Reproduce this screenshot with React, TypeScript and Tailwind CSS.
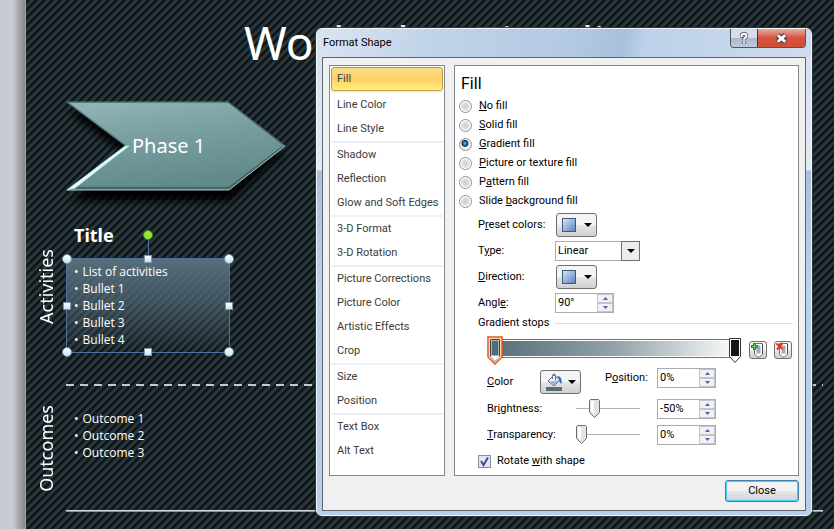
import { useState, type ReactNode } from 'react'

const NAV_GROUPS = [
  ['Fill'],
  ['Line Color', 'Line Style'],
  ['Shadow', 'Reflection', 'Glow and Soft Edges'],
  ['3-D Format', '3-D Rotation'],
  ['Picture Corrections', 'Picture Color', 'Artistic Effects', 'Crop'],
  ['Size', 'Position'],
  ['Text Box', 'Alt Text'],
]

// [before, access key, after]
const FILL_OPTIONS = [
  ['', 'N', 'o fill'],
  ['', 'S', 'olid fill'],
  ['', 'G', 'radient fill'],
  ['', 'P', 'icture or texture fill'],
  ['P', 'a', 'ttern fill'],
  ['Slide ', 'b', 'ackground fill'],
]

const HANDLES = [
  'left-0 top-0 rounded-full size-[10px]',
  'left-1/2 top-0 size-[8px]',
  'left-full top-0 rounded-full size-[10px]',
  'left-0 top-1/2 size-[8px]',
  'left-full top-1/2 size-[8px]',
  'left-0 top-full rounded-full size-[10px]',
  'left-1/2 top-full size-[8px]',
  'left-full top-full rounded-full size-[10px]',
]

const BUTTON = 'rounded-[3px] border border-[#707070] bg-linear-to-b from-[#f4f4f4] from-50% via-[#e6e6e6] via-50% to-[#d0d0d0]'

function Caret() {
  return (
    <svg width="8" height="4" viewBox="0 0 8 4" aria-hidden>
      <path d="M0 0h8L4 4z" fill="#000" />
    </svg>
  )
}

function BulletList({ items }: { items: string[] }) {
  return (
    <ul className="font-['Open_Sans',sans-serif] text-[12px] leading-[17px]">
      {items.map((item) => (
        <li key={item} className="flex gap-1">
          <span>•</span>
          {item}
        </li>
      ))}
    </ul>
  )
}

function PhaseArrow() {
  return (
    <svg className="ml-10 block overflow-visible" width="220" height="90" viewBox="0 0 220 90" aria-hidden>
      <defs>
        <linearGradient id="arrow" x1="0" y1="0" x2="0.3" y2="1">
          <stop offset="0" stopColor="#94b6b8" />
          <stop offset="0.5" stopColor="#779d9f" />
          <stop offset="1" stopColor="#628a8b" />
        </linearGradient>
        <filter id="soft" x="-10%" y="-10%" width="120%" height="140%">
          <feGaussianBlur stdDeviation="4" />
        </filter>
      </defs>
      <path d="M2 10h162l54 42-54 48H4l54-48z" fill="#000" filter="url(#soft)" />
      <path d="M1 1h161l57 44-56 44H1l59-44z" fill="url(#arrow)" />
      <path d="M1 1h161l57 44" fill="none" stroke="#47696b" strokeWidth="1.5" />
      <path d="M217 46l-54 41H5" fill="none" stroke="#466767" strokeWidth="2.5" />
      <path d="M219 45l-56 44H1" fill="none" stroke="#a2c4c2" strokeWidth="1" />
      <path d="M1 1l59 44" fill="none" stroke="#4e6f71" strokeWidth="1.5" />
      <path d="M1 89l58-44h4L9 87z" fill="#e4fffe" stroke="#b0dedd" strokeWidth="1" />
      <text x="66" y="52" fill="#fff" fontSize="20" fontFamily="Noto Sans, sans-serif">Phase 1</text>
    </svg>
  )
}

function Slide() {
  return (
    <div className="relative min-w-0 flex-1 overflow-hidden bg-[linear-gradient(135deg,#0f171a_0_31%,#29373c_31%_50%,#0f171a_50%_81%,#29373c_81%)] bg-size-[8px_8px] pr-[11px] text-white">
      <h1 className="pt-[14px] pl-[218px] text-[46px] leading-[56px] whitespace-nowrap">Work Plan Timeline</h1>
      <div className="pt-[31px]">
        <PhaseArrow />
      </div>
      <section className="grid grid-cols-[40px_1fr]">
        <h2 className="rotate-180 self-start justify-self-center mt-[58px] text-[18px] leading-6 [writing-mode:vertical-rl]">Activities</h2>
        <div className="h-[193px] pt-8">
          <h3 className="pl-2 text-[18px] leading-6 font-bold">Title</h3>
          <div className="relative mt-[11px] h-[95px] w-[164px] border border-[#4f729c] bg-linear-to-b from-[#566e7c] via-[#566e7c]/60 to-transparent px-[7px] py-1">
            <BulletList items={['List of activities', 'Bullet 1', 'Bullet 2', 'Bullet 3', 'Bullet 4']} />
            <span className="absolute -top-5 left-1/2 h-5 w-px bg-[#4f729c]" />
            <span className="absolute -top-6 left-1/2 size-[10px] -translate-1/2 rounded-full border border-[#4b8a1d] bg-[#8fe83c]" />
            {HANDLES.map((handle) => (
              <span key={handle} className={`absolute -translate-1/2 border border-[#7c97ab] bg-linear-to-b from-white to-[#c6e4ec] ${handle}`} />
            ))}
          </div>
        </div>
      </section>
      <div className="ml-10 h-0.5 bg-[repeating-linear-gradient(90deg,#c5cbcc_0_8px,transparent_8px_14px)]" />
      <section className="grid h-[124px] grid-cols-[40px_1fr]">
        <h2 className="rotate-180 self-center justify-self-center text-[18px] leading-6 [writing-mode:vertical-rl]">Outcomes</h2>
        <div className="pt-6 pl-2">
          <BulletList items={['Outcome 1', 'Outcome 2', 'Outcome 3']} />
        </div>
      </section>
      <div className="ml-10 h-0.5 border-t border-[#d5d8d8] bg-[#8d9292]" />
    </div>
  )
}

function Spinner({ id, label, value }: { id: string; label: string; value: string }) {
  const [text, setText] = useState(value)
  const step = (by: number) => setText((t) => t.replace(/-?\d+/, (n) => String(Number(n) + by)))
  return (
    <div className="flex h-5 w-[59px] border border-[#abadb3] bg-white">
      <input id={id} className="w-0 flex-1 pl-0.5 outline-none" value={text} onChange={(e) => setText(e.target.value)} />
      <div className="flex w-4 flex-col">
        <button type="button" aria-label={`Increase ${label}`} onClick={() => step(1)} className="flex flex-1 items-center justify-center border border-[#c3c5cc] bg-[#f1f1f3]">
          <svg width="5" height="3" viewBox="0 0 5 3"><path d="M0 3h5L2.5 0z" fill="#4a63b4" /></svg>
        </button>
        <button type="button" aria-label={`Decrease ${label}`} onClick={() => step(-1)} className="flex flex-1 items-center justify-center border border-[#c3c5cc] bg-[#f1f1f3]">
          <svg width="5" height="3" viewBox="0 0 5 3"><path d="M0 0h5L2.5 3z" fill="#4a63b4" /></svg>
        </button>
      </div>
    </div>
  )
}

function Slider({ label, start }: { label: string; start: number }) {
  const [value, setValue] = useState(start)
  return (
    <div className="relative h-5 w-16">
      <div className="mt-[9px] h-px bg-[#b0b0b0]" />
      <div className="absolute inset-y-0 right-[11px] left-0">
        <svg className="absolute top-0" style={{ left: `${value}%` }} width="11" height="19" viewBox="0 0 11 19" aria-hidden>
          <path d="M1.500.5h8l1 1v12l-5 5-5-5v-12z" fill="#e2e2e2" stroke="#6f6f6f" />
          <path d="M2 2h3v13l-3-3z" fill="#fff" />
        </svg>
      </div>
      <input
        type="range"
        aria-label={`${label} slider`}
        value={value}
        onChange={(e) => setValue(Number(e.target.value))}
        className="absolute inset-0 w-full opacity-0"
      />
    </div>
  )
}

function SwatchButton({ label }: { label: string }) {
  return (
    <button type="button" aria-label={label} className={`flex h-6 w-[41px] items-center justify-center gap-2 ${BUTTON}`}>
      <span className="size-[14px] border border-[#3f5878] bg-linear-to-br from-[#d3e6fa] to-[#5f84bd]" />
      <Caret />
    </button>
  )
}

function Row({ label, htmlFor, children }: { label: ReactNode; htmlFor?: string; children: ReactNode }) {
  return (
    <div className="flex h-[26px] items-center pl-[23px]">
      <label htmlFor={htmlFor} className="w-[77px]">{label}</label>
      {children}
    </div>
  )
}

function GradientStops() {
  return (
    <div className="mt-[6px] flex h-7 items-center pr-[6px] pl-8">
      <div className="relative h-7 flex-1 pt-[3px] pr-0.5 pl-1">
        <div className="h-[19px] border-y border-[#6d7275] bg-linear-to-r from-[#566e7a] via-[#93a2a9] to-white">
          <div className="h-full border-y border-white" />
        </div>
        <button type="button" aria-label="Gradient stop 1" className="absolute top-0 left-0">
          <svg width="16" height="29" viewBox="0 0 16 29">
            <path d="M1 1h14v20l-7 7-7-7z" fill="#fff" stroke="#e8541c" strokeWidth="1.500" />
            <path d="M2.500 22V2.500h11V22" fill="none" stroke="#fbd9a0" />
            <path d="M3.500 20.500v-17h9v17l-4.500 5z" fill="#fff" stroke="#444" />
            <path d="M4 21h8l-4 4z" fill="#fff" />
            <path d="M4.500 4.500h7v15h-7z" fill="#526b78" />
          </svg>
        </button>
        <button type="button" aria-label="Gradient stop 2" className="absolute top-0.5 right-0">
          <svg width="12" height="26" viewBox="0 0 12 26">
            <path d="M.5.5h11v18L6 24.500.5 18.500z" fill="#fff" stroke="#333" />
            <path d="M2 2h8v16H2z" fill="#12191c" />
          </svg>
        </button>
      </div>
      <div className="ml-2 flex gap-[7px]">
        <button type="button" aria-label="Add gradient stop" className={`size-[18px] ${BUTTON}`}>
          <svg width="16" height="16" viewBox="0 0 16 16">
            <path d="M4.500 1.500h8v10.500l-3 3h-2l-3-3z" fill="#fff" stroke="#6b707c" />
            <path d="M6.500 3.500h4v8h-4z" fill="#a4a8b8" />
            <path d="M12.500 2v10" stroke="#3f434d" />
            <path d="M4.500 1v7M1 4.500h7" stroke="#1f8a1f" strokeWidth="3" />
            <path d="M4.500 2v5M2 4.500h5" stroke="#5fd05a" />
          </svg>
        </button>
        <button type="button" aria-label="Remove gradient stop" className={`size-[18px] ${BUTTON}`}>
          <svg width="16" height="16" viewBox="0 0 16 16">
            <path d="M4.500 1.500h8v10.500l-3 3h-2l-3-3z" fill="#fff" stroke="#6b707c" />
            <path d="M6.500 3.500h4v8h-4z" fill="#a4a8b8" />
            <path d="M12.500 2v10" stroke="#3f434d" />
            <path d="M1.500 1.500l6 5.500M7.500 1L2 7.500" stroke="#e2311d" strokeWidth="2" />
          </svg>
        </button>
      </div>
    </div>
  )
}

function FillPanel() {
  const [fill, setFill] = useState(2)
  return (
    <div className="min-w-0 flex-1 border border-[#828790] bg-white pt-[5px] pb-px">
      <h2 className="pl-[6px] text-[16px] leading-[26px]">Fill</h2>
      <div role="radiogroup" aria-label="Fill" className="pl-1">
        {FILL_OPTIONS.map(([before, key, after], i) => (
          <label key={after} className="flex h-[19px] items-center gap-[7px]">
            <input
              type="radio"
              name="fill"
              checked={fill === i}
              onChange={() => setFill(i)}
              className="size-[13px] appearance-none rounded-full border border-[#8e8f8f] bg-[radial-gradient(circle,#c9cdd1_0,#e2e4e7_4px,#fff_5px)] checked:bg-[radial-gradient(circle_at_45%_40%,#5fd0f5_0,#12639a_2px,#0d3354_3px,#f0f0f0_4px)]"
            />
            <span>{before}<u>{key}</u>{after}</span>
          </label>
        ))}
      </div>
      <div className="pt-px">
        <Row label={<>P<u>r</u>eset colors:</>}>
          <div className="pl-px"><SwatchButton label="Preset colors" /></div>
        </Row>
        <Row label={<>T<u>y</u>pe:</>} htmlFor="type">
          <div className="relative h-5 w-[85px]">
            <select id="type" className="size-full appearance-none border border-[#abadb3] bg-white pl-0.5">
              <option>Linear</option>
              <option>Radial</option>
              <option>Rectangular</option>
              <option>Path</option>
            </select>
            <span className="pointer-events-none absolute inset-y-0 right-0 flex w-[19px] items-center justify-center border border-[#707070] bg-[#ececec]">
              <Caret />
            </span>
          </div>
        </Row>
        <Row label={<><u>D</u>irection:</>}>
          <div className="pl-px"><SwatchButton label="Direction" /></div>
        </Row>
        <Row label={<>Angl<u>e</u>:</>} htmlFor="angle">
          <Spinner id="angle" label="angle" value="90°" />
        </Row>
      </div>
      <div className="flex items-center gap-[6px] pr-[5px] pl-[23px] leading-[14px]">
        Gradient stops
        <span className="h-px flex-1 bg-[#d5dfe5]" />
      </div>
      <GradientStops />
      <div className="pt-1 pl-8">
        <div className="flex h-7 items-center">
          <span className="w-[53px]"><u>C</u>olor</span>
          <button type="button" aria-label="Color" className={`flex h-6 w-[41px] items-center justify-center gap-[5px] ${BUTTON}`}>
            <svg width="17" height="18" viewBox="0 0 17 18">
              <path d="M2 8l6-6 6 5-6 6z" fill="#e8f0fa" stroke="#4b6a9c" />
              <path d="M3 8.500l8-1 2 0-5 5z" fill="#9db9dd" />
              <path d="M6.500 6V2.500a1.500 1.500 0 013 0V7" fill="none" stroke="#6b7480" />
              <path d="M11 3c4 0 5 3 4.500 8-2-1-2.500-3-2-4.500z" fill="#3d66b0" />
              <path d="M0 14h16v4H0z" fill="#566e7a" />
            </svg>
            <Caret />
          </button>
          <label htmlFor="position" className="ml-6 w-[52px] self-start leading-5">P<u>o</u>sition:</label>
          <div className="self-start"><Spinner id="position" label="position" value="0%" /></div>
        </div>
        <div className="flex h-[26px] items-center">
          <label htmlFor="brightness" className="w-[89px]">Br<u>i</u>ghtness:</label>
          <Slider label="Brightness" start={25} />
          <div className="pl-[17px]"><Spinner id="brightness" label="brightness" value="-50%" /></div>
        </div>
        <div className="flex h-[26px] items-center">
          <label htmlFor="transparency" className="w-[89px]"><u>T</u>ransparency:</label>
          <Slider label="Transparency" start={0} />
          <div className="pl-[17px]"><Spinner id="transparency" label="transparency" value="0%" /></div>
        </div>
      </div>
      <label className="flex h-[26px] items-center gap-[6px] pl-[23px]">
        <span className="relative size-[13px]">
          <input type="checkbox" defaultChecked className="peer block size-[13px] appearance-none border border-[#8e8f8f] bg-[#e3e6ec]" />
          <svg className="pointer-events-none absolute inset-0 hidden peer-checked:block" width="13" height="13" viewBox="0 0 13 13">
            <path d="M3 6l2.500 4L10 2.500" fill="none" stroke="#3b4f93" strokeWidth="2" />
          </svg>
        </span>
        <span>Rotate <u>w</u>ith shape</span>
      </label>
    </div>
  )
}

function FormatShapeDialog() {
  const [section, setSection] = useState('Fill')
  return (
    <div
      role="dialog"
      aria-label="Format Shape"
      className="absolute top-7 right-[22px] left-[316px] rounded-[6px] border border-[#f2f6fb] bg-[linear-gradient(180deg,#d3e0ef_0,#e3ebf4_141px,#a9c1dc_142px,#b8d3ee_260px,#b5cfe9_100%)] px-[5px] pb-1 font-[Roboto,sans-serif] text-[11px] text-black shadow-[0_0_1px_1px_#30383c]"
    >
      <div className="-mx-[5px] flex h-7 items-start justify-between rounded-t-[5px] bg-[linear-gradient(100deg,#d9e4f1_0,#bfd2e8_25%,#b4cae3_50%,#a9c1dc_62%,#bdd1ea_66%,#cfdcec_100%)] pr-[5px] pl-[6px]">
        <span className="pt-[6px] leading-4">Format Shape</span>
        <div className="flex h-[19px] overflow-hidden rounded-b-[4px] border border-t-0 border-[#4d5562]">
          <button type="button" aria-label="Help" className="flex w-[27px] items-center justify-center border-r border-[#5b2a2a] bg-linear-to-b from-[#d5dde8] from-50% via-[#a9b7c9] via-50% to-[#bccadb]">
            <svg width="10" height="13" viewBox="0 0 10 13">
              <path d="M1 4h1.500c0-3 5-3 5-.3C7.500 5.500 5 5.500 5 8M5 9.300v2.400" fill="none" stroke="#555968" strokeWidth="3.600" />
              <path d="M1.500 4h1c0-3 5-3 5-.3C7.500 5.500 5 5.500 5 7.700M5 9.500v1.900" fill="none" stroke="#fff" strokeWidth="2" />
            </svg>
          </button>
          <button type="button" aria-label="Close window" className="flex w-[47px] items-center justify-center bg-linear-to-b from-[#e9aca2] from-0% via-[#d4523e] via-50% to-[#d14f38]">
            <svg width="13" height="11" viewBox="0 0 13 11">
              <path d="M2.500 2l8 7M10.500 2l-8 7" stroke="#5a4048" strokeWidth="5" />
              <path d="M2.800 2.200l7.400 6.600M10.200 2.200L2.800 8.800" stroke="#fff" strokeWidth="2.800" />
            </svg>
          </button>
        </div>
      </div>
      <div className="border border-[#5d6670] bg-[#f0f0f0] px-[6px] pt-[7px] pb-2">
        <div className="flex gap-[9px]">
          <nav aria-label="Sections" className="w-[116px] shrink-0 divide-y-2 divide-[#eff0f6] border border-[#828790] bg-white p-px text-[#3b3b3b]">
            {NAV_GROUPS.map((group) => (
              <div key={group[0]}>
                {group.map((name) => (
                  <button
                    key={name}
                    type="button"
                    onClick={() => setSection(name)}
                    className={`block h-6 w-full text-left whitespace-nowrap ${
                      section === name
                        ? 'rounded-[3px] border border-[#c29b3d] bg-linear-to-b from-[#fbdc86] via-[#fdd067] to-[#fff07c] pl-[5px]'
                        : 'pl-[6px]'
                    }`}
                  >
                    {name}
                  </button>
                ))}
              </div>
            ))}
          </nav>
          <FillPanel />
        </div>
        <div className="mt-1 flex justify-end">
          <button type="button" className="h-[22px] w-[74px] rounded-[3px] border border-[#3c7fb1] bg-linear-to-b from-[#f2f2f2] from-50% via-[#e4e8ea] via-50% to-[#cfd3d6] inset-ring inset-ring-[#48d0f2]">
            Close
          </button>
        </div>
      </div>
    </div>
  )
}

export default function App() {
  return (
    <main className="relative flex min-h-screen overflow-hidden font-['Noto_Sans',sans-serif]">
      <div className="w-[26px] shrink-0 border-r border-[#9fa3a6] bg-linear-to-r from-[#c8cbd1] from-50% to-[#85898d]" />
      <Slide />
      <FormatShapeDialog />
    </main>
  )
}
